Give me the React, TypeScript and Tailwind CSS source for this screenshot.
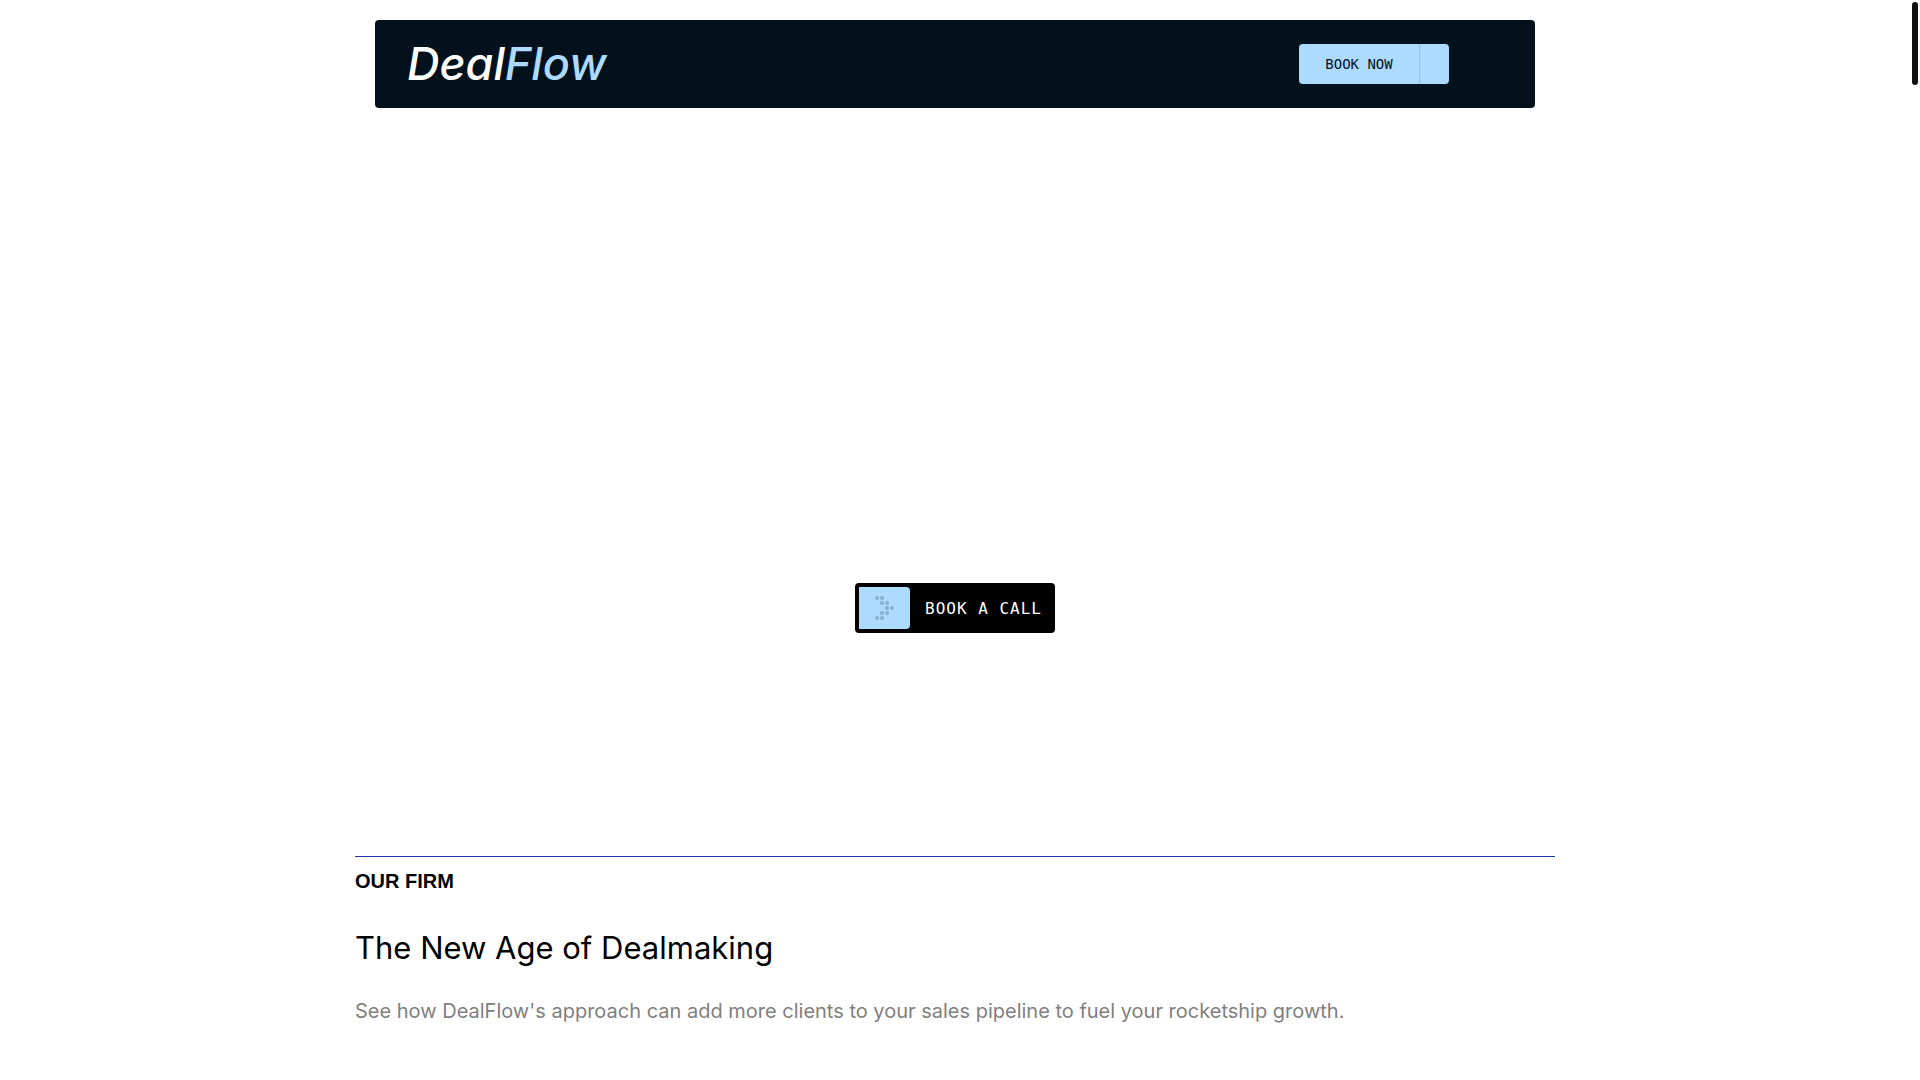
import React from 'react';

const ARROW_DOTS = [
  [2, 2], [7, 2],
  [7, 7], [12, 7],
  [12, 12], [17, 12],
  [7, 17], [12, 17],
  [2, 22], [7, 22],
];

const DotArrow: React.FC = () => (
  <svg className="h-6 w-5 fill-[#88b0cc]" viewBox="0 0 20 24" aria-hidden="true">
    {ARROW_DOTS.map(([cx, cy]) => (
      <circle key={`${cx}-${cy}`} cx={cx} cy={cy} r="2" />
    ))}
  </svg>
);

const Header: React.FC = () => (
  <header className="mx-5 mt-5 flex h-22 items-center justify-between rounded bg-[#03111d] pr-[86px] pl-8">
    <a
      href="#top"
      className="font-['Inter',sans-serif] text-[45px] leading-[56px] font-medium text-white italic"
    >
      Deal<span className="text-[#addbff]">Flow</span>
    </a>
    <button
      type="button"
      className="flex h-10 w-[150px] rounded bg-[#addbff] font-['DejaVu_Sans_Mono',monospace] text-[14px] leading-10 text-[#03111d]"
    >
      <span className="flex-1 border-r border-[#84c3f5]">BOOK NOW</span>
      <span className="w-[29px]" />
    </button>
  </header>
);

const Hero: React.FC = () => (
  <section className="flex h-[748px] justify-center pt-[475px]">
    <button
      type="button"
      className="flex h-[50px] w-[200px] items-center rounded bg-black pl-1 text-white"
    >
      <span className="flex h-[42px] w-[51px] items-center justify-center rounded-r bg-[#addbff]">
        <DotArrow />
      </span>
      <span className="flex-1 pt-px pl-[2px] text-center font-['DejaVu_Sans_Mono',monospace] text-[16px] tracking-[1px]">
        BOOK A CALL
      </span>
    </button>
  </section>
);

const Firm: React.FC = () => (
  <section className="border-t border-[#1e3aa8]">
    <p className="mt-3 font-['Liberation_Sans',sans-serif] text-[20px] leading-6 font-bold text-black">
      OUR FIRM
    </p>
    <h2 className="mt-9 font-['Inter',sans-serif] text-[31px] leading-[38px] text-black">
      The New Age of Dealmaking
    </h2>
    <p className="mt-[26px] font-['Inter',sans-serif] text-[20px] leading-9 text-[#808080]">
      See how DealFlow's approach can add more clients to your sales pipeline to fuel your
      rocketship growth.
    </p>
  </section>
);

export default function App() {
  return (
    <div id="top" className="flex min-h-screen justify-between bg-white">
      <main className="mx-auto w-full max-w-[1200px]">
        <Header />
        <Hero />
        <Firm />
      </main>
      <div className="w-[10px] shrink-0 px-[2px] pt-[2px]" aria-hidden="true">
        <div className="h-[83px] rounded-full bg-[#111111]" />
      </div>
    </div>
  );
}
